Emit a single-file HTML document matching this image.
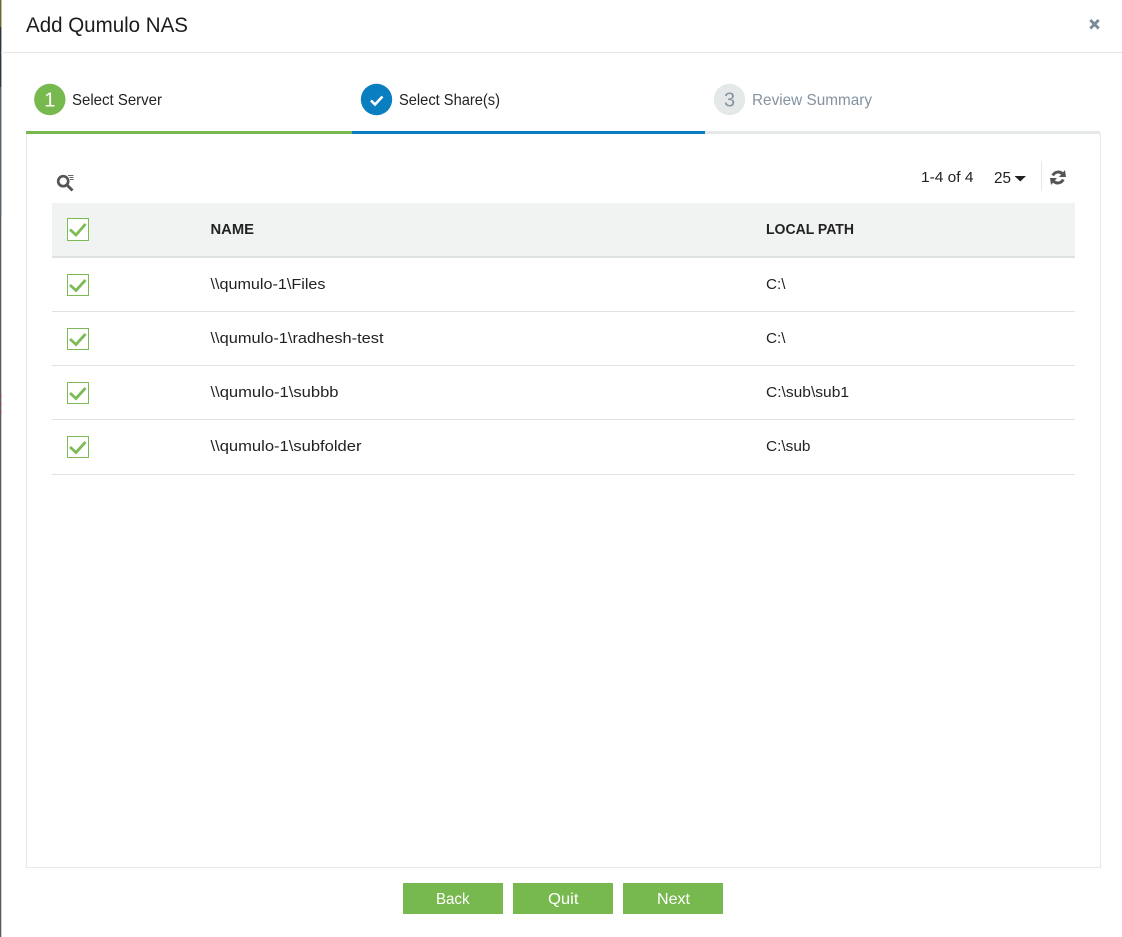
<!DOCTYPE html>
<html>
<head>
<meta charset="utf-8">
<title>Add Qumulo NAS</title>
<style>
html,body{margin:0;padding:0;background:#fff;width:1122px;height:937px;overflow:hidden}
svg{display:block}
text{font-family:"Liberation Sans",sans-serif;fill:#222}
</style>
</head>
<body>
<svg width="1122" height="937" viewBox="0 0 1122 937" xmlns="http://www.w3.org/2000/svg">
<rect width="1122" height="937" fill="#fff"/>
<!-- left strip -->
<rect x="0" y="0" width="1.300" height="937" fill="#5c5c5c"/>
<rect x="0" y="0" width="1.300" height="27" fill="#6e6a2c"/>
<rect x="0" y="27" width="1.300" height="60" fill="#2c3640"/>
<rect x="0" y="87" width="1.300" height="130" fill="#58626a"/>
<rect x="0" y="395" width="1.300" height="3" fill="#8a4a4a"/>
<rect x="0" y="403" width="1.300" height="3" fill="#8a4a4a"/>
<rect x="0" y="410" width="1.300" height="3" fill="#8a4a4a"/>

<!-- header -->
<text x="26" y="32" font-size="21.500" textLength="162" lengthAdjust="spacingAndGlyphs" style="fill:#1c1c1c">Add Qumulo NAS</text>
<rect x="1" y="52" width="1121" height="1" fill="#e6e6e6"/>
<path d="M1090.300 20L1098.700 28.500M1098.700 20L1090.300 28.500" stroke="#7b8a96" stroke-width="2.900" fill="none"/>

<!-- stepper -->
<circle cx="49.800" cy="99.500" r="15.700" fill="#78b94f"/>
<text x="49.800" y="106.500" font-size="20" text-anchor="middle" style="fill:#fff">1</text>
<text x="72" y="105" font-size="16" textLength="90" lengthAdjust="spacingAndGlyphs">Select Server</text>

<circle cx="376.500" cy="99.500" r="15.700" fill="#0a7fc0"/>
<path d="M371 100.500L375 104.500L382.500 96.500" stroke="#fff" stroke-width="2.600" fill="none"/>
<text x="399" y="105" font-size="16" textLength="101" lengthAdjust="spacingAndGlyphs">Select Share(s)</text>

<circle cx="729.500" cy="99.500" r="15.700" fill="#e4e8e9"/>
<text x="729.500" y="106.500" font-size="20" text-anchor="middle" style="fill:#84939f">3</text>
<text x="752" y="105" font-size="16" textLength="120" lengthAdjust="spacingAndGlyphs" style="fill:#84939f">Review Summary</text>

<!-- panel -->
<rect x="26.500" y="133.500" width="1074" height="734" fill="#fff" stroke="#e6e9e9"/>
<rect x="26" y="131" width="326" height="3" fill="#78b94f"/>
<rect x="352" y="131" width="353" height="3" fill="#0a7fc0"/>
<rect x="705" y="131" width="395" height="3" fill="#e4e8e9"/>

<!-- search icon -->
<circle cx="63.200" cy="181.200" r="5" fill="none" stroke="#555" stroke-width="2.700"/>
<path d="M67 185L72.500 190.500" stroke="#555" stroke-width="2.900" fill="none"/>
<path d="M68 175.500H73.500M69.500 177.500H73.500M70 179.500H73.500" stroke="#666" stroke-width="1" fill="none"/>

<!-- pager -->
<text x="921" y="182" font-size="15" textLength="52.500" lengthAdjust="spacingAndGlyphs">1-4 of 4</text>
<text x="994" y="183" font-size="15.500" textLength="17" lengthAdjust="spacingAndGlyphs">25</text>
<path d="M1014.500 176H1026L1020.250 181.500Z" fill="#222"/>
<rect x="1041" y="161" width="1" height="30" fill="#e6e9e9"/>
<!-- refresh icon -->
<path d="M1052.800 175.500A6 6 0 0 1 1062.500 173.800" fill="none" stroke="#555" stroke-width="2.900"/>
<path d="M1059 177H1066L1065 170Z" fill="#555"/>
<path d="M1063.200 179.500A6 6 0 0 1 1053.500 181.200" fill="none" stroke="#555" stroke-width="2.900"/>
<path d="M1057 178H1050L1051 185Z" fill="#555"/>

<!-- table header -->
<rect x="52" y="203" width="1023" height="53" fill="#f1f3f3"/>
<rect x="52" y="256" width="1023" height="2" fill="#dfe2e2"/>
<text x="210.500" y="234" font-size="14.500" font-weight="bold" textLength="43.500" lengthAdjust="spacingAndGlyphs">NAME</text>
<text x="766" y="234" font-size="14.500" font-weight="bold" textLength="88" lengthAdjust="spacingAndGlyphs">LOCAL PATH</text>

<!-- checkboxes -->
<g fill="#fff" stroke="#7cbb56" stroke-width="1">
<rect x="67.500" y="218.500" width="21" height="22"/>
<rect x="67.500" y="274.500" width="21" height="21"/>
<rect x="67.500" y="328.500" width="21" height="21"/>
<rect x="67.500" y="382.500" width="21" height="21"/>
<rect x="67.500" y="436.500" width="21" height="21"/>
</g>
<g fill="none" stroke="#7cbb56" stroke-width="2.800">
<path d="M70 229.500L76 235L85.500 224"/>
<path d="M70 285L76 290.500L85.500 280"/>
<path d="M70 339L76 344.500L85.500 334"/>
<path d="M70 393L76 398.500L85.500 388"/>
<path d="M70 447L76 452.500L85.500 442"/>
</g>

<!-- rows -->
<text x="210.500" y="289" font-size="15" textLength="115" lengthAdjust="spacingAndGlyphs">\\qumulo-1\Files</text>
<text x="766" y="289" font-size="15" textLength="19.500" lengthAdjust="spacingAndGlyphs">C:\</text>
<rect x="52" y="311" width="1023" height="1" fill="#dfe2e2"/>

<text x="210.500" y="343" font-size="15" textLength="173" lengthAdjust="spacingAndGlyphs">\\qumulo-1\radhesh-test</text>
<text x="766" y="343" font-size="15" textLength="19.500" lengthAdjust="spacingAndGlyphs">C:\</text>
<rect x="52" y="365" width="1023" height="1" fill="#dfe2e2"/>

<text x="210.500" y="397" font-size="15" textLength="128" lengthAdjust="spacingAndGlyphs">\\qumulo-1\subbb</text>
<text x="766" y="397" font-size="15" textLength="83" lengthAdjust="spacingAndGlyphs">C:\sub\sub1</text>
<rect x="52" y="419" width="1023" height="1" fill="#dfe2e2"/>

<text x="210.500" y="451" font-size="15" textLength="151" lengthAdjust="spacingAndGlyphs">\\qumulo-1\subfolder</text>
<text x="766" y="451" font-size="15" textLength="44.500" lengthAdjust="spacingAndGlyphs">C:\sub</text>
<rect x="52" y="474" width="1023" height="1" fill="#dfe2e2"/>

<!-- buttons -->
<rect x="403" y="883" width="100" height="31" fill="#78b94f"/>
<rect x="513" y="883" width="100" height="31" fill="#78b94f"/>
<rect x="623" y="883" width="100" height="31" fill="#78b94f"/>
<text x="436" y="904" font-size="16" textLength="33.500" lengthAdjust="spacingAndGlyphs" style="fill:#fff">Back</text>
<text x="548" y="904" font-size="16" textLength="30.500" lengthAdjust="spacingAndGlyphs" style="fill:#fff">Quit</text>
<text x="657" y="904" font-size="16" textLength="33" lengthAdjust="spacingAndGlyphs" style="fill:#fff">Next</text>
</svg>
</body>
</html>
